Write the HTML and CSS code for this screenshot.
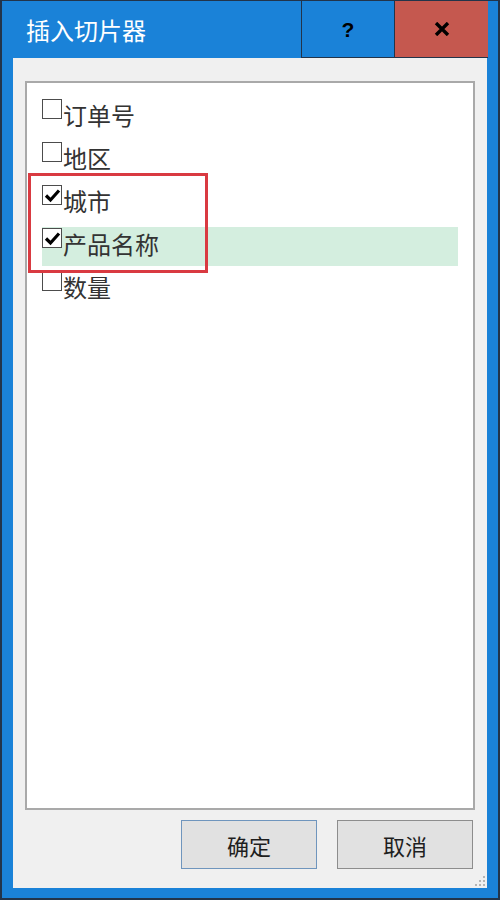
FILE: index.html
```html
<!DOCTYPE html>
<html lang="zh-CN">
<head>
<meta charset="utf-8">
<title>插入切片器</title>
<link rel="stylesheet" href="styles.css">
</head>
<body>
<div class="window">
  <div class="titlebar">
    <div class="title">插入切片器</div>
    <div class="cap-btn help">?</div>
    <div class="cap-btn close">
      <svg width="16" height="14" viewBox="0 0 16 14"><path d="M2 1 L14 13 M14 1 L2 13" stroke="#000" stroke-width="3.4" fill="none"/></svg>
    </div>
  </div>
  <div class="content">
    <div class="listbox">
      <div class="row"><span class="cb"></span><span class="label">订单号</span></div>
      <div class="row"><span class="cb"></span><span class="label">地区</span></div>
      <div class="row"><span class="cb checked"><svg width="17" height="15" viewBox="0 0 17 15"><path d="M2 7.5 L6.5 12 L15 2.5" stroke="#000" stroke-width="3.2" fill="none"/></svg></span><span class="label">城市</span></div>
      <div class="row selected"><span class="cb checked"><svg width="17" height="15" viewBox="0 0 17 15"><path d="M2 7.5 L6.5 12 L15 2.5" stroke="#000" stroke-width="3.2" fill="none"/></svg></span><span class="label">产品名称</span></div>
      <div class="row"><span class="cb"></span><span class="label">数量</span></div>
      <div class="mark"></div>
    </div>
    <div class="buttons">
      <div class="btn default">确定</div>
      <div class="btn">取消</div>
    </div>
    <div class="grip">
      <svg width="12" height="12" viewBox="0 0 12 12" fill="#b5b5b5">
        <rect x="9" y="1" width="2" height="2"/>
        <rect x="5" y="5" width="2" height="2"/><rect x="9" y="5" width="2" height="2"/>
        <rect x="1" y="9" width="2" height="2"/><rect x="5" y="9" width="2" height="2"/><rect x="9" y="9" width="2" height="2"/>
      </svg>
    </div>
  </div>
</div>
</body>
</html>
```
FILE: styles.css
```css
* { box-sizing: border-box; }
html, body { margin: 0; padding: 0; }
body {
  width: 500px;
  height: 900px;
  font-family: "Noto Sans CJK SC", "Noto Sans", sans-serif;
}
.window {
  width: 500px;
  height: 900px;
  background: #1a82d8;
  border: 1px solid #22344a;
  border-left-width: 2px;
  border-right-width: 2px;
  border-bottom-width: 2px;
  display: flex;
  flex-direction: column;
}
.titlebar {
  height: 57px;
  display: flex;
  flex: none;
  margin-right: 10px;
}
.title {
  flex: 1;
  color: #fff;
  font-size: 24px;
  line-height: 57px;
  padding-left: 24px;
}
.cap-btn {
  height: 57px;
  display: flex;
  align-items: center;
  justify-content: center;
  border-bottom: 1px solid #22344a;
}
.help {
  width: 94px;
  border-left: 1px solid #22344a;
  border-right: 1px solid #22344a;
  font-family: "Liberation Sans", sans-serif;
  font-weight: bold;
  font-size: 21px;
  color: #000;
  padding-top: 1px;
}
.close {
  width: 93px;
  background: #c5584f;
}
.content {
  flex: 1;
  background: #f0f0f0;
  margin: 0 11px 10px 11px;
  padding: 23px 12px 0 12px;
  display: flex;
  flex-direction: column;
  position: relative;
}
.listbox {
  height: 729px;
  background: #fff;
  border: 2px solid #a9a9a9;
  padding: 15px 0 0 15px;
  position: relative;
  flex: none;
}
.row {
  display: flex;
  align-items: flex-start;
  height: 39px;
  margin-bottom: 4px;
  width: 416px;
}
.row.selected {
  background: #d4eedf;
}
.cb {
  width: 20px;
  height: 20px;
  border: 1px solid #4c4c4c;
  background: #fff;
  margin-top: 1px;
  flex: none;
  display: flex;
  align-items: center;
  justify-content: center;
}
.label {
  font-size: 24px;
  line-height: 33px;
  color: #333;
  margin-left: 1px;
}
.mark {
  position: absolute;
  left: 1px;
  top: 90px;
  width: 180px;
  height: 100px;
  border: 3px solid #d93a41;
}
.buttons {
  display: flex;
  justify-content: flex-end;
  gap: 20px;
  margin-top: 10px;
  padding-right: 2px;
}
.btn {
  width: 136px;
  height: 49px;
  background: #e1e1e1;
  border: 1px solid #8d8d8d;
  font-size: 22px;
  color: #1e1e1e;
  display: flex;
  align-items: center;
  justify-content: center;
}
.btn.default {
  border-color: #6f95bd;
}
.grip {
  position: absolute;
  right: 1px;
  bottom: 1px;
  width: 12px;
  height: 12px;
  line-height: 0;
}
```
